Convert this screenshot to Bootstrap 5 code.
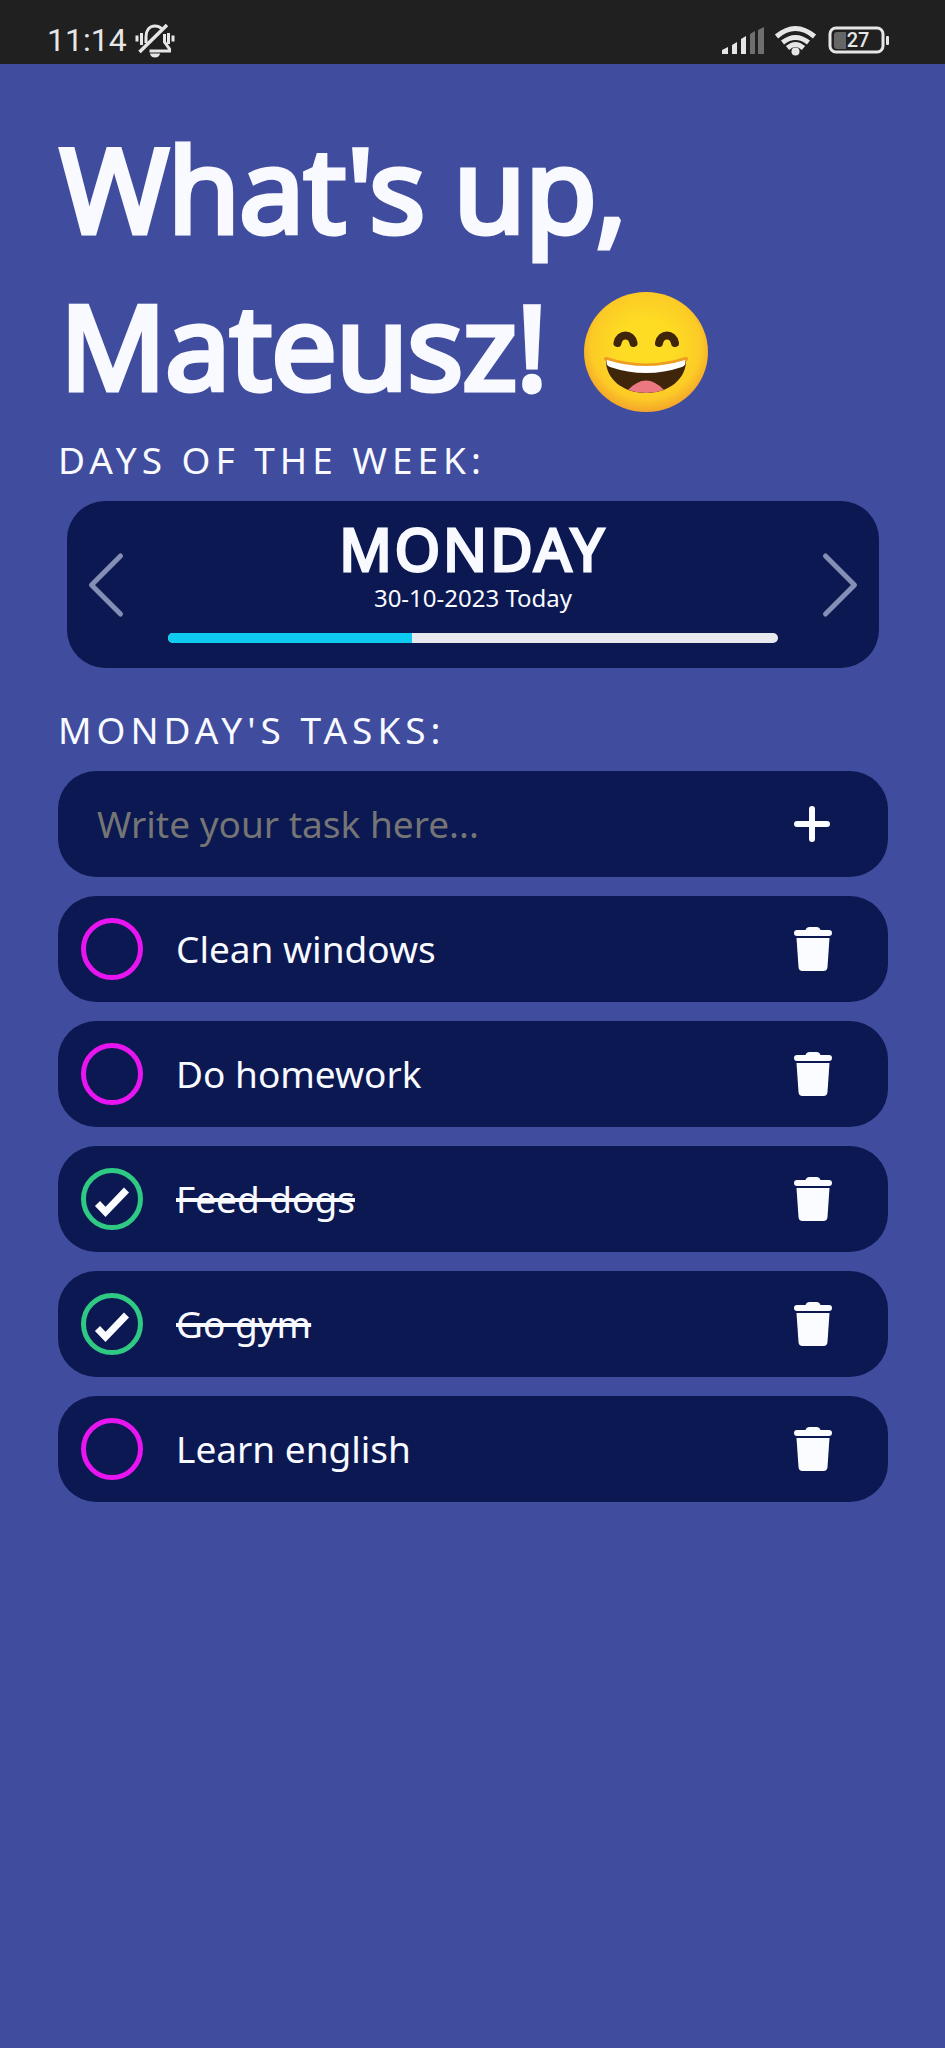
<!DOCTYPE html>
<html lang="en">
<head>
<meta charset="utf-8">
<meta name="viewport" content="width=device-width, initial-scale=1">
<title>Weekly tasks</title>
<link href="https://cdn.jsdelivr.net/npm/bootstrap@5.3.0/dist/css/bootstrap.min.css" rel="stylesheet">
<style>
  body { background: #404d9e; color: #f9faff; font-family: "Noto Sans", sans-serif; font-size: 37px; line-height: 50px; }
  .status-bar { height: 64px; padding: 16px 55px 0 47px; background: #202020; color: #e6e6e6; font-family: Roboto, sans-serif; font-size: 32px; line-height: 48px; }
  .status-bar svg { display: block; }
  .battery-text { font-size: 20px; font-weight: 500; }
  .screen { padding: 45px 57px 60px 58px; }
  .greeting { font-size: 117px; line-height: 157px; font-weight: 400; letter-spacing: -1px; -webkit-text-stroke: 5px currentColor; padding-left: 2px; margin-bottom: 12px; }
  .greeting svg { width: 124px; height: 122px; margin-left: 8px; vertical-align: -23px; -webkit-text-stroke: 0; }
  .section-label { font-size: 37px; line-height: 50px; font-weight: 400; letter-spacing: 5px; text-transform: uppercase; margin-bottom: 16px; }
  .panel { background: #0b1852; border-radius: 38px; }
  .day-card { margin: 0 9px 37px; padding: 0 20px; }
  .day-name { font-size: 58px; line-height: 61px; font-weight: 400; letter-spacing: 3px; -webkit-text-stroke: 3px currentColor; margin-bottom: 2px; }
  .day-date { font-size: 24px; line-height: 34px; margin-bottom: 18px; }
  .progress { height: 10px; border-radius: 5px; background: #e8e9ee; }
  .progress-bar { background: #0dcaf0; }
  .day-info { flex: 0 0 79%; padding: 17px 0 25px; }
  .day-nav, .row-action { padding: 0; border: 0; background: none; color: #fbfcff; }
  .day-nav svg, .row-action svg { display: block; }
  .day-nav { color: #858eb5; }
  .task-stack { display: grid; gap: 19px; }
  .task-row { min-height: 106px; padding: 0 55px 0 23px; }
  .task-input { padding: 0 0 0 16px; border: 0; background: none; color: inherit; outline: 0; min-width: 0; }
  .task-input::placeholder { color: #757575; opacity: 1; }
  .form-check-input.task-check { width: 62px; height: 62px; margin: 0; border: 5px solid #e815f0; border-radius: 50%; background-color: transparent; background-size: 62px 62px; background-position: center; background-origin: border-box; flex: none; }
  .form-check-input.task-check:checked { border-color: #2fc983; background-color: transparent; background-image: url("data:image/svg+xml,%3Csvg xmlns='http://www.w3.org/2000/svg' viewBox='0 0 62 62'%3E%3Cpath d='M16.5 35.5 24.500 44 45.500 22' fill='none' stroke='%23fbfcff' stroke-width='7'/%3E%3C/svg%3E"); }
  .task-text { margin-left: 33px; }
  .task-check:checked + .task-text { text-decoration: line-through; text-decoration-thickness: 4px; }
</style>
</head>
<body>
<svg class="d-none" aria-hidden="true">
  <symbol id="trash" viewBox="0 0 40 46">
    <path d="M4 4h8.500q1-3 4-3h7q3 0 4 3H36a3 3 0 0 1 0 6H4a3 3 0 0 1 0-6z"/>
    <path d="M3.500 12h33l-2 29q-.3 4-4 4h-21q-3.700 0-4-4z"/>
  </symbol>
</svg>

<header class="status-bar d-flex justify-content-between">
  <div class="d-flex gap-2">
    <span>11:14</span>
    <svg width="42" height="48" viewBox="134 16 42 48" fill="none" stroke="currentColor" stroke-width="3" role="img" aria-label="Vibrate">
      <path d="M145 43v-6c0-6 3-11 9-11 2.500 0 5 1 6.500 2.500M163.500 34v8l5 7v2h-20"/>
      <path d="M138.500 52 166 25" stroke-width="3.500"/>
      <path d="M136 35.500v6M140.500 33v12M167.500 33v11M172 35.500v6"/>
      <path d="M149 53.500h10a5 4 0 0 1-10 0z" fill="currentColor" stroke="none"/>
    </svg>
  </div>
  <div class="d-flex">
    <svg width="105" height="48" viewBox="720 16 105 48" role="img" aria-label="Signal and Wi-Fi">
      <g fill="currentColor">
        <path d="m721 50 6-3v7h-6zM731 45l5-3v12h-5zM740 39l5-3v18h-5z"/>
        <path d="m749 34 5-3v23h-5zM757 30l6-3v27h-6z" opacity=".4"/>
        <circle cx="794.500" cy="51.500" r="4"/>
      </g>
      <g fill="none" stroke="currentColor" stroke-width="5">
        <path d="M775.500 36.500q19-16 38 0M781.500 42.500q13-10 26 0M786.500 48q8-7 16 0"/>
      </g>
    </svg>
    <div class="position-relative">
      <svg width="64" height="48" viewBox="825 16 64 48" aria-hidden="true">
        <rect x="829" y="28" width="53" height="24" rx="6" fill="none" stroke="currentColor" stroke-width="3"/>
        <path d="M836 32h9v17h-9q-3 0-3-3V35q0-3 3-3z" fill="#666"/>
        <rect x="885" y="36" width="3" height="9" rx="1" fill="currentColor"/>
      </svg>
      <span class="battery-text position-absolute top-0 start-0 w-100 text-center">27</span>
    </div>
  </div>
</header>

<main class="screen">
  <h1 class="greeting">What's up,<br>Mateusz!
    <svg viewBox="0 0 124 122" role="img" aria-label="Grinning face">
      <defs><radialGradient id="face" cx=".5" cy=".45" r=".55"><stop offset=".4" stop-color="#fddc23"/><stop offset=".8" stop-color="#fccb26"/><stop offset="1" stop-color="#f4a52b"/></radialGradient></defs>
      <ellipse cx="62" cy="61" rx="62" ry="60" fill="url(#face)"/>
      <path d="M33.500 52c2-10 14-10 16 0M75 52c2-10 14-10 16 0" fill="none" stroke="#3f260b" stroke-width="8" stroke-linecap="round"/>
      <path d="M22 68q40 13 80 0" fill="none" stroke="#ee9d20" stroke-width="4" stroke-linecap="round"/>
      <path d="M22 70q40 12 80 0c0 17-16 32-40 32S22 87 22 70z" fill="#3f260b"/>
      <path d="M23 69q39 12 78 0 2 5-3 7-36 12-72 0-5-2-3-7z" fill="#fff"/>
      <path d="M44 99q18-19 36 0-18 6-36 0z" fill="#ec7881"/>
    </svg>
  </h1>

  <h2 class="section-label">Days of the week:</h2>
  <section class="panel day-card d-flex justify-content-between align-items-center">
    <button class="day-nav" type="button" aria-label="Previous day">
      <svg width="38" height="66" viewBox="0 0 38 66" fill="none" stroke="currentColor" stroke-width="5" stroke-linecap="round" stroke-linejoin="round"><path d="M33.500 4 4.500 33l29 29"/></svg>
    </button>
    <div class="day-info text-center">
      <h3 class="day-name">MONDAY</h3>
      <p class="day-date">30-10-2023 Today</p>
      <div class="progress" role="progressbar" aria-label="Tasks done" aria-valuenow="40" aria-valuemin="0" aria-valuemax="100">
        <div class="progress-bar" style="width: 40%"></div>
      </div>
    </div>
    <button class="day-nav" type="button" aria-label="Next day">
      <svg width="38" height="66" viewBox="0 0 38 66" fill="none" stroke="currentColor" stroke-width="5" stroke-linecap="round" stroke-linejoin="round"><path d="m4.500 4 29 29-29 29"/></svg>
    </button>
  </section>

  <h2 class="section-label">Monday's tasks:</h2>
  <div class="task-stack">
    <form class="panel task-row d-flex align-items-center">
      <input class="task-input flex-grow-1" type="text" placeholder="Write your task here..." aria-label="New task">
      <button class="row-action" type="button" aria-label="Add task">
        <svg width="40" height="46" viewBox="0 0 40 46" fill="none" stroke="currentColor" stroke-width="6" stroke-linecap="round"><path d="M4 23h30M19 8v30"/></svg>
      </button>
    </form>
    <div class="panel task-row d-flex align-items-center">
      <input class="form-check-input task-check" type="checkbox" id="t1">
      <label class="task-text flex-grow-1" for="t1">Clean windows</label>
      <button class="row-action" type="button" aria-label="Delete"><svg width="40" height="46" fill="currentColor"><use href="#trash"/></svg></button>
    </div>
    <div class="panel task-row d-flex align-items-center">
      <input class="form-check-input task-check" type="checkbox" id="t2">
      <label class="task-text flex-grow-1" for="t2">Do homework</label>
      <button class="row-action" type="button" aria-label="Delete"><svg width="40" height="46" fill="currentColor"><use href="#trash"/></svg></button>
    </div>
    <div class="panel task-row d-flex align-items-center">
      <input class="form-check-input task-check" type="checkbox" id="t3" checked>
      <label class="task-text flex-grow-1" for="t3">Feed dogs</label>
      <button class="row-action" type="button" aria-label="Delete"><svg width="40" height="46" fill="currentColor"><use href="#trash"/></svg></button>
    </div>
    <div class="panel task-row d-flex align-items-center">
      <input class="form-check-input task-check" type="checkbox" id="t4" checked>
      <label class="task-text flex-grow-1" for="t4">Go gym</label>
      <button class="row-action" type="button" aria-label="Delete"><svg width="40" height="46" fill="currentColor"><use href="#trash"/></svg></button>
    </div>
    <div class="panel task-row d-flex align-items-center">
      <input class="form-check-input task-check" type="checkbox" id="t5">
      <label class="task-text flex-grow-1" for="t5">Learn english</label>
      <button class="row-action" type="button" aria-label="Delete"><svg width="40" height="46" fill="currentColor"><use href="#trash"/></svg></button>
    </div>
  </div>
</main>
<script src="https://cdn.jsdelivr.net/npm/bootstrap@5.3.0/dist/js/bootstrap.bundle.min.js"></script>
</body>
</html>
